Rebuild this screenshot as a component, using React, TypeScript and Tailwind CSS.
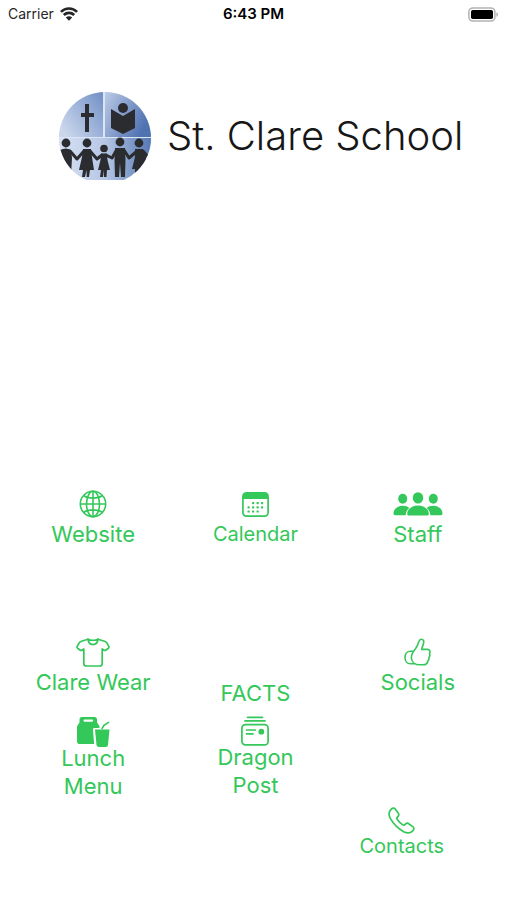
import type { ReactNode } from "react";
import { clsx } from "clsx";

function WifiIcon() {
  return (
    <svg viewBox="0 0 18 14" className="h-3.5 w-[18px]" fill="none" stroke="currentColor" strokeWidth="2.6" aria-hidden="true">
      <path d="M0.9 4.9C5.4 0.3 12.6 0.3 17.1 4.9" />
      <path d="M3.8 8C6.7 5.2 11.3 5.2 14.2 8" />
      <path d="M9 13.7 5.8 10.4C7.6 8.8 10.4 8.8 12.2 10.4Z" fill="currentColor" stroke="none" />
    </svg>
  );
}

function BatteryIcon() {
  return (
    <svg viewBox="0 0 31 15" className="h-[15px] w-[31px]" aria-hidden="true">
      <rect x="0.9" y="0.9" width="26" height="13.2" rx="4" fill="#fff" stroke="#b3b3b3" strokeWidth="1.5" />
      <rect x="3" y="3" width="22" height="9" rx="1.8" fill="#000" />
      <path d="M28.4 5.2C30.6 6 30.6 9 28.4 9.8Z" fill="#b3b3b3" />
    </svg>
  );
}

function StatusBar() {
  return (
    <header className="grid h-7 grid-cols-3 items-center px-2 text-black">
      <div className="flex items-center gap-1.5 text-sm text-neutral-800">
        Carrier <WifiIcon />
      </div>
      <time className="text-center text-[15px] font-semibold">6:43 PM</time>
      <div className="flex justify-end">
        <BatteryIcon />
      </div>
    </header>
  );
}

function SchoolLogo() {
  return (
    <svg viewBox="0 0 92 88" className="h-[88px] w-[92px] shrink-0" role="img" aria-label="School crest">
      <defs>
        <clipPath id="crest">
          <circle cx="46" cy="46" r="46" />
        </clipPath>
        <linearGradient id="topLeft" x1="0" y1="0.7" x2="1" y2="0">
          <stop offset="0" stopColor="#c9d6ec" />
          <stop offset="1" stopColor="#718fc5" />
        </linearGradient>
        <linearGradient id="topRight" x1="0" y1="0" x2="1" y2="0.5">
          <stop offset="0" stopColor="#bccbe7" />
          <stop offset="1" stopColor="#4f72b1" />
        </linearGradient>
        <linearGradient id="bottom" x1="0" y1="0" x2="1" y2="0">
          <stop offset="0" stopColor="#d7e1f2" />
          <stop offset="0.5" stopColor="#b6c7e5" />
          <stop offset="1" stopColor="#5678b5" />
        </linearGradient>
      </defs>
      <g clipPath="url(#crest)">
        <rect width="92" height="88" fill="#dce5f4" />
        <rect width="44" height="45" fill="url(#topLeft)" />
        <rect x="46" width="46" height="45" fill="url(#topRight)" />
        <rect y="46" width="92" height="42" fill="url(#bottom)" />
        <g fill="#2b2c30">
          {/* cross */}
          <path d="M26 12h4v9h5v4h-5v15h-4V25h-4v-4h4z" />
          {/* reader */}
          <circle cx="64" cy="16" r="5" />
          <path d="M52 17 64 24 76 17V36L64 42 52 36Z" />
          {/* children holding hands */}
          <circle cx="7" cy="51" r="4.4" />
          <circle cx="28" cy="51" r="4.4" />
          <circle cx="45" cy="56.5" r="3.8" />
          <circle cx="61" cy="50" r="4.4" />
          <circle cx="80" cy="51" r="4.4" />
          <path d="M1 58Q7 55 12 58L13 66 12 84H8L6 72 3 84H0Z" />
          <path d="M24 57H32L33 65 35 78H31L30 85H27.7L27.5 78 26 85H23L24 78H20L23 65Z" />
          <path d="M42 61.5H48L48.5 68 51 78H48L47.5 85H45L45 78 44 85H41L42 78H39L41.5 68Z" />
          <path d="M56 56H66L66.5 68 66 85H62L61 71 60 85H56L55.5 68Z" />
          <path d="M76 57H84L87 65 90 77H85L84 85H81L80 78 79 85H76L76 77H73L76 65Z" />
        </g>
        <path
          d="M11 59 18 67 25 59M31 59 38 67 43 63M47 63 53 66 57 59M65 58 70 66 77 60M84 59 91 67"
          fill="none"
          stroke="#2b2c30"
          strokeWidth="3"
          strokeLinecap="round"
          strokeLinejoin="round"
        />
      </g>
    </svg>
  );
}

function GlobeIcon() {
  return (
    <svg viewBox="0 0 28 28" className="size-7" fill="none" stroke="currentColor" strokeWidth="1.6" aria-hidden="true">
      <circle cx="14" cy="14" r="12.7" />
      <ellipse cx="14" cy="14" rx="6.5" ry="12.7" />
      <path d="M14 1.3V26.7M1.3 14H26.7M4.6 5.5C9 9 19 9 23.4 5.5M4.6 22.5C9 19 19 19 23.4 22.5" />
    </svg>
  );
}

const CALENDAR_DOTS = [
  [11, 11], [15.5, 11], [20, 11],
  [6.5, 15.2], [11, 15.2], [15.5, 15.2], [20, 15.2],
  [6.5, 19.4], [11, 19.4], [15.5, 19.4],
];

function CalendarIcon() {
  return (
    <svg viewBox="0 0 27 25" className="h-[25px] w-[27px]" aria-hidden="true">
      <rect x="0.9" y="0.9" width="25.2" height="23.2" rx="3.5" fill="none" stroke="currentColor" strokeWidth="1.7" />
      <path d="M1 7V4Q1 1 4 1H23Q26 1 26 4V7Z" fill="currentColor" />
      {CALENDAR_DOTS.map(([x, y]) => (
        <rect key={`${x}-${y}`} x={x - 1} y={y - 1} width="2.2" height="2.2" rx="0.6" fill="currentColor" />
      ))}
    </svg>
  );
}

function PeopleIcon() {
  return (
    <svg viewBox="0 0 50 24" className="h-6 w-[50px]" fill="currentColor" aria-hidden="true">
      <ellipse cx="9.7" cy="6.8" rx="4.5" ry="5" />
      <ellipse cx="40.3" cy="6.8" rx="4.5" ry="5" />
      <path d="M0.5 21.5C0.5 17 4.5 13.7 9.7 13.7C12.5 13.7 14.7 14.5 16.3 15.9C14 17.7 12.9 20.2 12.7 23.3H2Q0.5 23.3 0.5 21.5Z" />
      <path d="M49.5 21.5C49.5 17 45.5 13.7 40.3 13.7C37.5 13.7 35.3 14.5 33.7 15.9C36 17.7 37.1 20.2 37.3 23.3H48Q49.5 23.3 49.5 21.5Z" />
      <ellipse cx="25" cy="5.9" rx="5.2" ry="5.7" />
      <path d="M14.2 22C14.2 17 19 13.4 25 13.4S35.8 17 35.8 22Q35.8 23.5 34.2 23.5H15.8Q14.2 23.5 14.2 22Z" />
    </svg>
  );
}

function ShirtIcon() {
  return (
    <svg viewBox="0 0 34 29" className="h-[29px] w-[34px]" fill="none" stroke="currentColor" strokeWidth="1.7" strokeLinejoin="round" strokeLinecap="round" aria-hidden="true">
      <path d="M12 1.2 5.5 3.2Q4 3.7 3.1 5L1.2 8.3Q0.7 9.4 1.6 10.2L4.3 12.2Q5 12.7 5.8 12.2L7.8 10.9V25.5Q7.8 28 10.3 28H23.7Q26.2 28 26.2 25.5V10.9L28.2 12.2Q29 12.7 29.7 12.2L32.4 10.2Q33.3 9.4 32.8 8.3L30.9 5Q30 3.7 28.5 3.2L22 1.2" />
      <path d="M12 1.2C14 2.6 20 2.6 22 1.2C21.3 8.4 12.7 8.4 12 1.2Z" />
    </svg>
  );
}

function LunchIcon() {
  return (
    <svg viewBox="0 0 34 32" className="h-8 w-[34px] shrink-0" fill="currentColor" aria-hidden="true">
      <path
        fillRule="evenodd"
        d="M6 1H18.5Q21 1 21 3.5V6.3L23.5 10.2V12H18.2Q16.8 12 16.9 13.5L18.2 28H3.8Q1 28 1 25.2V11.5Q1 10.2 1.7 9.2L3.5 6.5V3.500Q3.500 1 6 1ZM8.700 3.600Q7.500 3.600 7.500 4.700T8.700 5.800H16Q17.200 5.800 17.200 4.700T16 3.600Z"
      />
      <path d="M19 13.500H33.500L32 28.900Q31.800 31 29.700 31H22.800Q20.700 31 20.500 28.900Z" />
      <path d="M26 12.500 28 9.300 32.500 6.300" fill="none" stroke="currentColor" strokeWidth="1.6" strokeLinecap="round" />
    </svg>
  );
}

function PostIcon() {
  return (
    <svg viewBox="0 0 28 30" className="h-[30px] w-7 shrink-0" fill="none" stroke="currentColor" strokeWidth="1.7" strokeLinecap="round" aria-hidden="true">
      <path d="M6.5 1.3H21.5M4 4.9H24" />
      <rect x="0.9" y="8.6" width="26.2" height="20.3" rx="3.5" />
      <path d="M5.5 14H14.5M5.5 17.8H12" />
      <circle cx="20.3" cy="15.7" r="2.9" fill="currentColor" stroke="none" />
    </svg>
  );
}

function ThumbIcon() {
  return (
    <svg viewBox="0 0 27 28" className="h-7 w-[27px]" fill="none" stroke="currentColor" strokeWidth="1.6" strokeLinejoin="round" strokeLinecap="round" aria-hidden="true">
      <path d="M17.3 1.2C19.5 1.2 20 3 19.6 5C19.2 7.3 18 9.2 17.7 11.4H23.5C26.2 11.4 26.3 14 25.5 15.3C26.2 16.7 25.8 18.3 25 19.3C25.3 20.9 24.7 22.3 23.7 23.1C23.5 25.5 21.8 26.8 19 26.8H15.7C11.5 26.8 7.7 24.5 7.4 20C7.1 16 9 14 11.5 10.8C13.2 8.5 14 6.3 14.9 3.5C15.3 2 16 1.2 17.3 1.2Z" />
      <path d="M8.7 13.2H6.5C3 13.2 1 16.2 1 19.4C1 23 3.2 25.8 6.5 25.8H10.3" />
    </svg>
  );
}

function PhoneIcon() {
  return (
    <svg viewBox="0 0 27 27" className="size-[27px] shrink-0" fill="none" stroke="currentColor" strokeWidth="1.7" strokeLinejoin="round" aria-hidden="true">
      <path d="M3.2 2.2C4.6 0.8 6.3 0.7 7.4 2.2L10.3 6.3C11.2 7.6 10.9 8.5 9.9 9.6L9 10.6C8.6 11.2 8.7 11.7 9.1 12.3C10.6 14.5 12.5 16.4 14.7 17.9C15.3 18.3 15.8 18.4 16.4 18L17.4 17.1C18.5 16.1 19.4 15.8 20.7 16.7L24.8 19.6C26.3 20.7 26.2 22.4 24.8 23.8C22.3 26.4 19.2 26.6 15.7 24.7C10.3 21.6 5.4 16.7 2.3 11.3C0.4 7.8 0.6 4.7 3.2 2.2Z" />
    </svg>
  );
}

interface TileProps {
  label: ReactNode;
  icon?: ReactNode;
  /** Smaller label text. */
  small?: boolean;
  /** Pulls the label up against the icon. */
  tight?: boolean;
  className?: string;
}

function Tile({ label, icon, small, tight, className }: TileProps) {
  return (
    <a
      href="#"
      className={clsx(
        "flex flex-col items-center text-center leading-7",
        small ? "text-[20px]" : "text-[22px]",
        className,
      )}
    >
      {icon && <span className={clsx("flex items-center", tight ? "h-6" : "h-8")}>{icon}</span>}
      <span>{label}</span>
    </a>
  );
}

export default function App() {
  return (
    <div className="min-h-screen bg-white font-[Inter,sans-serif]">
      <StatusBar />
      <main>
        <div className="flex items-center gap-4 pt-16 pl-[59px]">
          <SchoolLogo />
          <h1 className="text-[40px] leading-none font-light whitespace-nowrap text-neutral-900">St. Clare School</h1>
        </div>

        <nav className="grid grid-cols-3 pt-[308px] pr-2 pb-8 pl-3 text-[#34c759]">
          <div className="flex flex-col">
            <Tile label="Website" icon={<GlobeIcon />} />
            <Tile label="Clare Wear" icon={<ShirtIcon />} className="mt-[88px]" />
            <Tile label={<>Lunch<br />Menu</>} icon={<LunchIcon />} tight className="mt-6" />
          </div>
          <div className="flex flex-col">
            <Tile label="Calendar" icon={<CalendarIcon />} small />
            <Tile label="FACTS" className="mt-[131px]" />
            <Tile label={<>Dragon<br />Post</>} icon={<PostIcon />} tight className="mt-3" />
          </div>
          <div className="flex flex-col">
            <Tile label="Staff" icon={<PeopleIcon />} />
            <Tile label="Socials" icon={<ThumbIcon />} className="mt-[88px]" />
            <Tile label="Contacts" icon={<PhoneIcon />} small tight className="mt-28 pr-8" />
          </div>
        </nav>
      </main>
    </div>
  );
}
